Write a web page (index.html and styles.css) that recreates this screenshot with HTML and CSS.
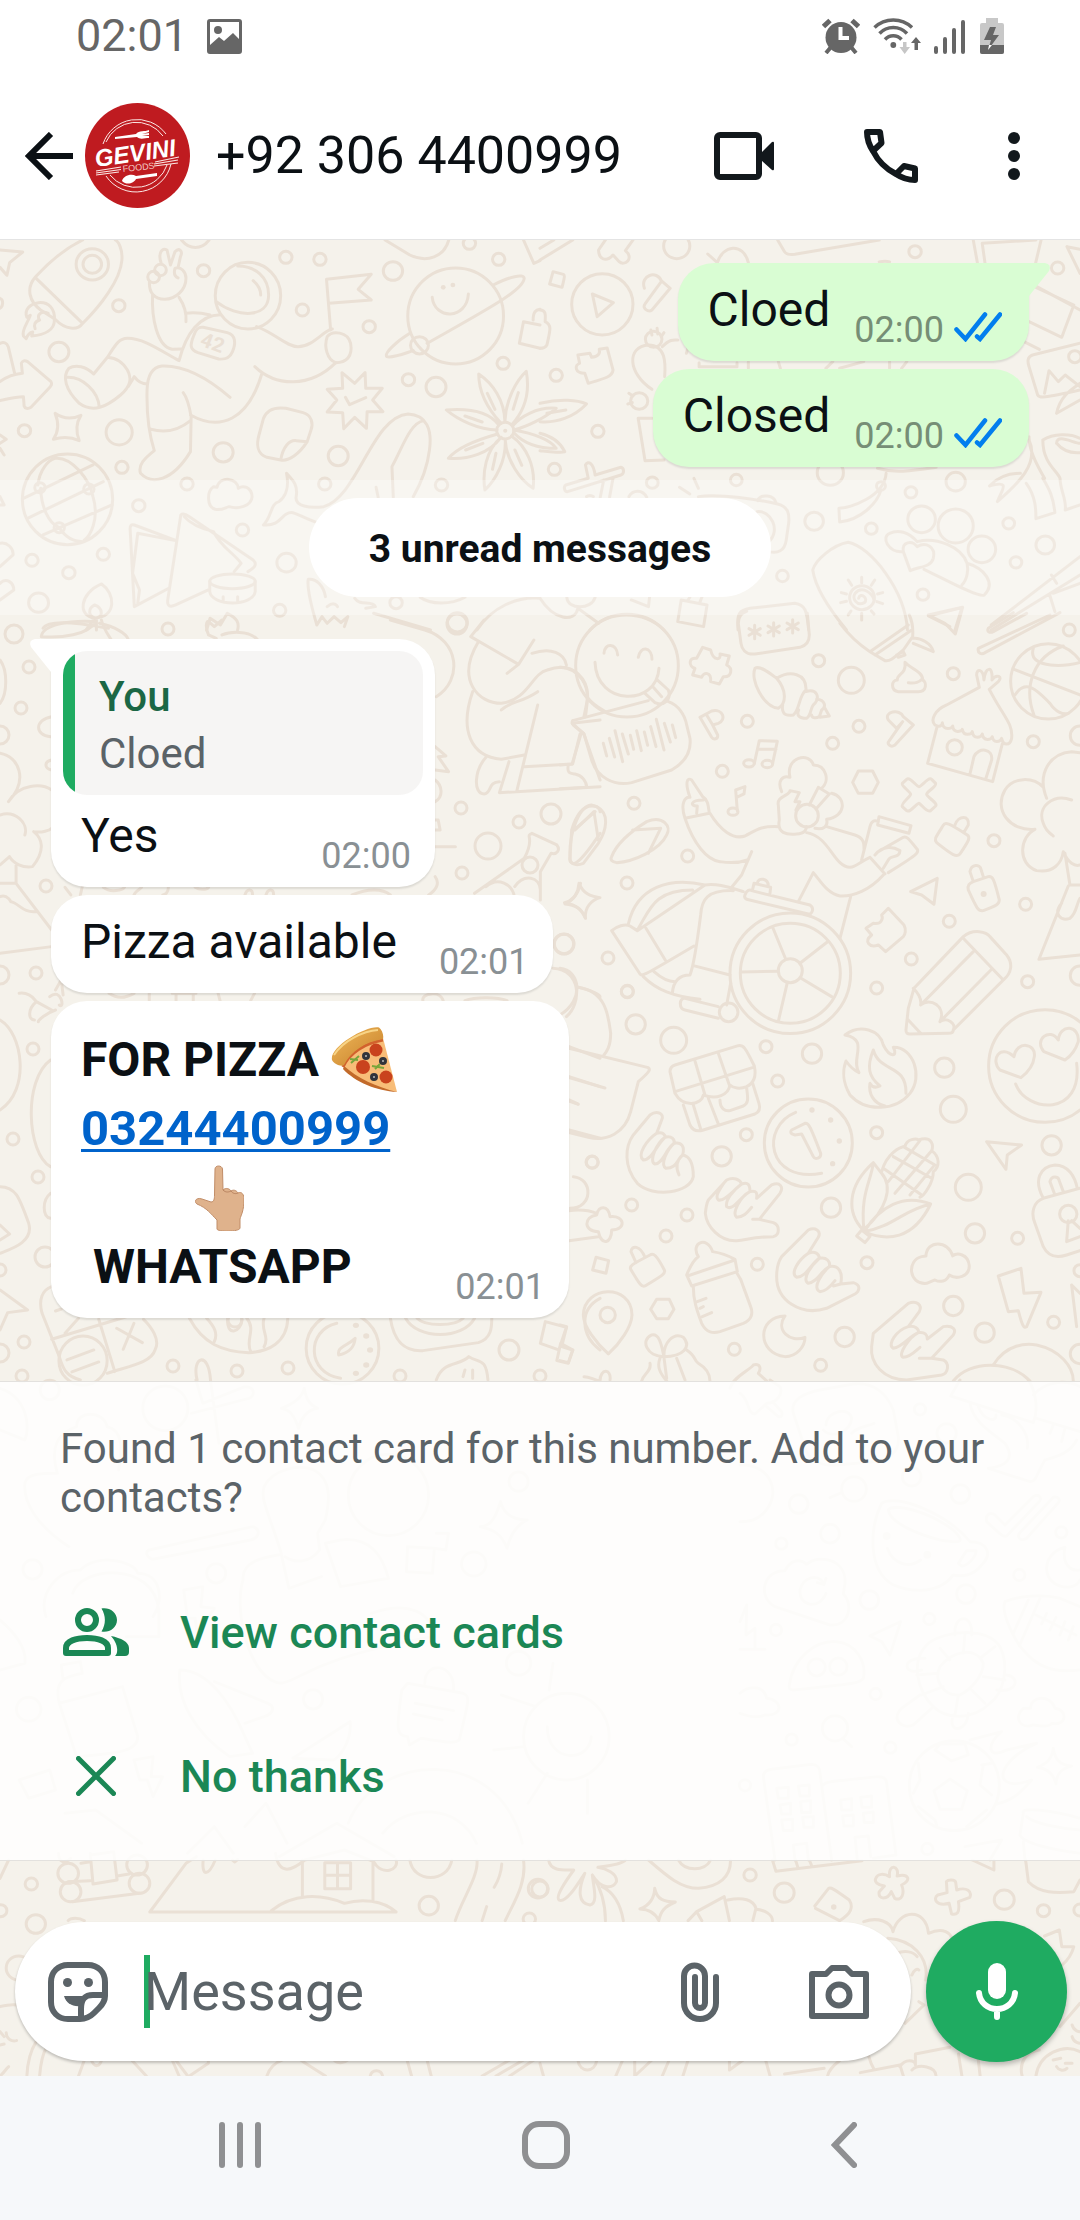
FILE: index.html
```html
<!DOCTYPE html>
<html lang="en">
<head>
<meta charset="utf-8">
<meta name="viewport" content="width=device-width, initial-scale=1">
<title>+92 306 4400999</title>
<link rel="stylesheet" href="styles.css">
</head>
<body>
<div class="statusbar">
  <span class="statusbar-time">02:01</span>
  <svg width="35" height="35" viewBox="0 0 35 35" aria-hidden="true"><path fill="#666" fill-rule="evenodd" d="M3 0H32Q35 0 35 3V32Q35 35 32 35H3Q0 35 0 32V3Q0 0 3 0ZM3 3V26L12 18L17 22L26 14L32 20V3Z"/><circle cx="11" cy="11" r="4" fill="#666"/></svg>
  <div class="statusbar-icons">
    <svg width="38" height="36" viewBox="0 0 38 36" aria-hidden="true"><g stroke="#666" stroke-width="5"><path d="M1.500 8.500L8 2.500M36.500 8.500L30 2.500"/><path d="M4 35L9 29M34 35L29 29" stroke-width="4"/></g><circle cx="19" cy="19.500" r="15.500" fill="#666"/><path d="M18.500 9V20H27" fill="none" stroke="#fff" stroke-width="4"/></svg>
    <svg class="wifi" width="48" height="36" viewBox="0 0 48 36" aria-hidden="true"><g fill="none" stroke="#666" stroke-width="3.500"><path d="M1.500 9.500C12 -.5 28.500 -.5 39 9.500M6.500 15.500C14 7.500 26.500 7.500 34 15.500M12 21.500C16.500 16.500 24 16.500 28.500 21.500"/></g><circle cx="20.300" cy="27" r="2.900" fill="#666"/><path d="M30 24H33.500V29H37L31.700 36L26.500 29H30Z" fill="#c6c6c6"/><path d="M41.500 32V25H38L43 19L48 25H45V32Z" fill="#666"/></svg>
    <svg class="signal" width="32" height="36" viewBox="0 0 32 36" aria-hidden="true"><path d="M2 30V34M11 21V34M20 12V34M29 4V34" stroke="#666" stroke-width="4" stroke-linecap="round"/></svg>
    <svg class="battery" width="24" height="36" viewBox="0 0 24 36" aria-hidden="true"><path d="M6 0H18V5H22Q24 5 24 7V34Q24 36 22 36H2Q0 36 0 34V7Q0 5 2 5H6Z" fill="#c8c8c8"/><path d="M0 27H24V34Q24 36 22 36H2Q0 36 0 34Z" fill="#666"/><path d="M10 9H16L13 17H19L8 32L11 22H4Z" fill="#666"/><path d="M9 27H12L8 32Z" fill="#fff"/></svg>
  </div>
</div>

<header class="appbar">
  <button class="icon-btn" aria-label="Back"><svg width="48" height="48" viewBox="0 0 48 48"><path d="M26 2L4 24L26 46M4 24H48" fill="none" stroke="#0b1014" stroke-width="6"/></svg></button>
  <svg class="avatar" viewBox="0 0 105 105" role="img" aria-label="Gevini Foods">
    <circle cx="52.500" cy="52.500" r="52.500" fill="#bf1b20"/>
    <g fill="none" stroke="#fbe9e6" stroke-width="1">
      <path d="M18 41A36 36 0 0 1 81 31M21 39A33 33 0 0 1 78 33M86 61A36 36 0 0 1 21 73M82 62A33 33 0 0 1 25 72"/>
      <path d="M11 68L36 64M11 70L36 66.500M11 72L34 69M70 59L94 54M69 61L93 57M69 63L93 60" stroke-width="1.200"/>
    </g>
    <path d="M30 34L51 31C54 27 60 29 64 27V29L57 31L64 30V32L57 33L64 33V35C60 35 55 37 52 34L30 36Z" fill="#fff"/>
    <path d="M72 70L51 73C46 70 38 73 37 78C42 83 49 80 51 76L72 73Z" fill="#fff"/>
    <text class="logo-name" x="11" y="64" transform="rotate(-8 11 64)">GEVINI</text>
    <text class="logo-sub" x="38" y="69" transform="rotate(-6 38 69)">FOODS</text>
  </svg>
  <h1 class="appbar-title">+92 306 4400999</h1>
  <div class="appbar-actions">
    <button class="icon-btn" aria-label="Video call"><svg width="60" height="48" viewBox="0 0 60 48"><rect x="3" y="3" width="42" height="42" rx="3" fill="none" stroke="#12181c" stroke-width="6"/><path d="M47 21L58 10Q60 9 60 11V37Q60 39 58 38L47 28Z" fill="#12181c"/></svg></button>
    <button class="icon-btn" aria-label="Voice call"><svg width="54" height="54" viewBox="0 0 54 54"><path d="M3 3H16L17.500 14L9 22C5 16 3 9 3 3ZM51 51V39.500L40 37L32 45C38 49 45 51 51 51ZM9 22C14 32 22 40 32 45" fill="none" stroke="#12181c" stroke-width="6" stroke-linejoin="round"/></svg></button>
    <button class="icon-btn" aria-label="More options"><svg width="12" height="48" viewBox="0 0 12 48" fill="#12181c"><circle cx="6" cy="6" r="6"/><circle cx="6" cy="24" r="6"/><circle cx="6" cy="42" r="6"/></svg></button>
  </div>
</header>

<main class="chat">
  <svg class="wallpaper" viewBox="0 240 1080 1836" preserveAspectRatio="xMidYMin slice" aria-hidden="true">
    <defs>
      <g id="ast"><path d="M0 -20V20M-17 -10L17 10M-17 10L17 -10"/></g>
    </defs>
    <!-- top left: rocket, astronaut, planet, whale -->
    <g transform="translate(0 230) scale(.3444 .3333)">
      <path d="M240 30C180 60 130 110 102 142C75 175 85 215 118 240L160 268C190 300 225 302 240 280C290 230 350 150 354 90C356 60 345 35 335 30M102 142L240 280"/>
      <circle cx="268" cy="103" r="47"/><circle cx="268" cy="103" r="27"/>
      <path d="M158 270C160 235 140 215 112 218C85 222 70 240 78 262L88 256C80 280 62 300 68 318L76 326C80 315 85 308 95 306L92 318C130 315 158 300 158 270ZM140 250C120 240 105 255 115 270C100 275 98 285 102 296"/>
      <path d="M0 60L66 66L28 98L20 136L0 112M527 30C550 60 585 60 607 30M1118 30L1190 75C1240 100 1290 80 1303 30M1520 30L1550 100L1568 92"/>
      <path d="M434 155C432 190 450 208 478 208C510 208 540 180 540 145C540 125 525 108 508 115C504 130 508 140 517 144M468 100C458 70 470 52 485 60L495 105L508 65C520 52 532 62 524 80L518 108"/>
      <circle cx="446" cy="141" r="17"/><circle cx="466" cy="120" r="17"/>
      <path d="M443 195C440 260 455 350 500 358L527 357M520 202C535 225 542 250 540 275M540 250C570 246 590 250 610 255"/>
      <ellipse cx="720" cy="197" rx="95" ry="100"/>
      <path d="M628 215C690 265 780 265 780 195C780 140 740 108 690 108M735 152C750 165 757 180 757 195"/>
      <path d="M640 254C580 255 540 310 520 392C470 365 420 325 370 325C345 325 335 345 312 382L272 432C250 410 220 402 200 415C180 440 190 480 230 520C270 550 310 530 350 495C385 465 380 440 370 420C355 395 340 385 312 382M195 442C240 440 285 485 288 530M372 470L390 440C400 455 410 462 428 462"/>
      <path d="M668 502C610 450 540 405 470 408C440 412 428 440 427 480C425 560 435 620 448 662C420 685 400 705 408 730C440 765 500 755 553 665L555 560C550 530 545 505 532 488M438 598C480 610 520 600 553 572M553 555C640 605 720 570 760 432M740 410C800 470 900 475 975 398M745 290C800 310 830 350 865 350C910 350 940 300 965 297"/>
      <path d="M590 292L660 308C685 315 685 340 675 365C665 390 645 388 635 387L575 368C550 358 552 345 562 318C568 298 575 290 590 292Z"/>
      <text class="doodle-text" x="578" y="346" transform="rotate(20 578 346)">42</text>
      <path d="M960 300L948 148L1078 133L1040 178L1078 210L955 220M950 320C965 300 1010 305 1018 340C1025 380 1005 398 975 398C950 390 940 350 950 320Z"/>
      <ellipse cx="1323" cy="258" rx="139" ry="144"/>
      <path d="M1432 165C1480 140 1520 130 1522 145C1520 180 1420 235 1240 340M1190 310C1150 335 1115 370 1123 380C1140 385 1170 372 1200 362M1255 202C1262 270 1355 270 1360 192"/>
      <circle cx="1218" cy="346" r="26"/><circle class="dot" cx="1287" cy="172" r="7"/><circle class="dot" cx="1315" cy="165" r="7"/>
      <path d="M0 455C20 440 45 432 65 430L62 400C65 392 72 390 80 395L148 455C152 462 150 465 146 470L90 532C80 538 72 535 70 528L68 500C40 500 20 508 0 512M0 340C10 335 20 338 24 350L42 428"/>
      <path d="M160 550C185 568 210 568 235 556C220 580 220 605 230 632C205 620 180 620 155 628C170 605 172 580 160 550Z"/>
      <path d="M1030 460L1060 428L1062 475L1110 475L1082 510L1112 545L1066 545L1064 595L1030 562L998 596L995 548L950 546L978 510L950 478L995 475L993 428ZM1003 502L1015 524L1062 503"/>
      <path d="M830 535L880 548C905 555 910 580 903 600L892 635C870 670 840 695 815 690L775 682C745 672 745 640 752 615L765 565C775 540 795 530 830 535ZM815 690C822 650 840 630 860 632L892 635"/>
      <path d="M765 885C820 890 815 845 850 848C870 855 880 862 915 876M765 885C790 860 785 820 810 815C830 800 840 770 832 730C850 750 866 765 860 800C855 830 900 835 940 830C1040 800 1080 560 1185 552C1240 555 1255 600 1247 660C1240 720 1222 760 1200 800M1230 572C1190 580 1170 650 1138 710L1142 802M1092 772L1098 802"/>
      <circle cx="1467" cy="602" r="25"/><circle class="dot" cx="1467" cy="602" r="6"/>
      <path d="M1455 580C1410 530 1390 480 1390 432C1430 460 1465 510 1466 575C1468 510 1500 450 1528 424C1540 490 1525 540 1485 585M1443 600C1390 600 1330 570 1296 540C1360 535 1420 545 1448 585M1445 612C1400 625 1330 650 1302 685C1360 690 1420 670 1455 622C1410 660 1400 730 1408 780C1440 750 1470 690 1467 630C1470 690 1510 750 1548 775C1555 710 1530 650 1485 618M1492 608C1520 640 1560 655 1615 655C1600 630 1550 610 1492 600C1530 590 1580 565 1615 535C1560 530 1510 560 1488 588M1415 490L1437 538M1505 488L1490 538M1350 558L1400 576M1352 660L1402 640M1430 718L1440 670M1515 706L1495 660"/>
      <ellipse cx="196" cy="808" rx="131" ry="136"/>
      <path d="M110 765C115 720 140 690 160 685C210 680 260 750 270 800C290 870 260 920 245 930M68 805L270 705M80 865L300 755M125 915L325 825M118 775C120 830 140 880 172 893C195 930 220 935 240 935"/>
      <circle cx="116" cy="773" r="15"/><circle cx="258" cy="777" r="15"/><circle cx="172" cy="893" r="15"/>
      <path d="M620 770C600 785 600 830 625 838C645 842 655 832 665 830C690 838 730 830 732 800C730 770 705 765 692 775C690 745 640 735 630 772C625 770 622 770 620 770Z"/>
      <path d="M512 932L390 885C380 882 377 888 378 900L390 1130L490 1075M400 910L510 932M400 910L385 1030L405 1080L400 1120M605 1080L510 1125C495 1132 485 1130 487 1110L525 855C530 850 540 853 550 860L735 990C745 1000 745 1010 720 1025M535 860C560 890 600 900 620 905C640 950 680 970 700 1000L680 1025"/>
      <ellipse cx="675" cy="1054" rx="66" ry="22"/><path d="M609 1054V1085C615 1130 735 1130 741 1085V1054M648 1100V1115M690 1100V1115"/>
      <path d="M295 1062C335 1090 340 1162 275 1164C225 1160 230 1090 295 1062ZM275 1125C300 1135 300 1164 278 1164C255 1160 255 1135 275 1125M125 1195C140 1170 210 1175 315 1195M275 1164L250 1200M280 1164V1200"/>
      <path d="M920 1185C910 1150 890 1080 895 1048C920 1045 940 1070 945 1100M920 1185L935 1160L950 1180L970 1160L990 1178L1010 1160L1000 1190M1030 1105C1045 1130 1080 1110 1090 1130L1062 1135M1085 1150L1250 1200M1385 1200C1430 1130 1500 1100 1568 1105M1220 1102C1250 1125 1310 1125 1350 1102M600 1200L610 1165L640 1185L660 1150C690 1165 695 1180 690 1200M950 1130C965 1118 975 1120 980 1130"/>
      <path d="M1520 275L1568 285M1520 275L1508 340L1568 355M1548 270C1548 245 1556 240 1568 238M0 940C20 935 40 955 38 975L0 1010M0 1060C20 1040 40 1060 40 1080L0 1110M0 205C12 210 8 230 0 235M0 615L18 628L0 640M0 655L12 675M0 800L12 825L0 825"/>
      <circle cx="345" cy="227" r="18"/><circle cx="591" cy="122" r="18"/><circle cx="830" cy="82" r="18"/><circle cx="929" cy="88" r="18"/><circle cx="1141" cy="123" r="28"/><circle cx="878" cy="240" r="18"/><circle cx="1072" cy="290" r="18"/><circle cx="1363" cy="40" r="18"/><circle cx="1448" cy="88" r="18"/><circle cx="171" cy="366" r="29"/><circle cx="71" cy="602" r="18"/><circle cx="346" cy="607" r="38"/><circle cx="354" cy="712" r="18"/><circle cx="648" cy="667" r="29"/><circle cx="982" cy="678" r="29"/><circle cx="1186" cy="449" r="18"/><circle cx="1266" cy="471" r="29"/><circle cx="1461" cy="400" r="18"/><circle cx="543" cy="762" r="18"/><circle cx="403" cy="827" r="18"/><circle cx="943" cy="762" r="18"/><circle cx="1282" cy="765" r="18"/><circle cx="704" cy="900" r="18"/><circle cx="832" cy="998" r="28"/><circle cx="93" cy="991" r="18"/><circle cx="300" cy="973" r="18"/><circle cx="200" cy="1028" r="18"/><circle cx="112" cy="1118" r="29"/><circle cx="812" cy="1141" r="18"/><circle cx="1150" cy="1118" r="18"/><circle cx="1328" cy="1177" r="29"/>
    </g>
    <!-- top right: play button, books, surfboard -->
    <g transform="translate(540 230) scale(.3444 .3333)">
      <path d="M190 30L170 60C170 85 190 100 212 75L230 95C245 110 275 85 248 62L270 30M0 55L40 30M0 90L95 30M152 192L213 218L166 260ZM38 125L68 133C72 135 72 140 64 172L28 162ZM303 175C290 135 340 120 352 152L378 175L325 240C315 248 295 235 305 222L352 155"/>
      <circle cx="397" cy="48" r="38"/><ellipse cx="181" cy="223" rx="89" ry="92"/>
      <path d="M110 375L145 370L150 382C170 380 175 370 172 358L195 354L212 420C210 440 190 445 140 460L130 430C100 430 100 405 115 400ZM0 520C60 505 110 510 135 522C100 560 50 580 0 575M20 550L75 540M0 610C40 620 60 640 72 665C40 670 20 665 0 662M0 240C20 240 15 260 15 275C35 285 30 300 20 345C15 355 8 355 0 355"/>
      <path d="M325 478C255 430 250 350 315 345C365 345 365 400 362 440M355 350C380 325 390 330 400 330M285 565L305 692L360 690M285 565H325M425 370L432 345M322 300L325 315M340 295L342 312M360 308L352 320M258 490L270 498M255 522L268 518"/>
      <circle cx="330" cy="328" r="24"/><circle cx="288" cy="513" r="25"/>
      <path d="M690 30L710 65C715 75 730 74 740 73L985 30M487 72L515 98C530 45 590 35 605 98M1258 30L1270 98M1284 40L1292 98M1284 40L1440 30M1455 30L1425 160L1568 240M1435 170L1550 225L1515 322L1420 275M1530 50L1568 130M1530 50L1568 58M985 96C1000 92 1005 92 1015 96"/>
      <path d="M1568 340L1430 375C1415 380 1415 395 1420 410L1445 495C1450 505 1460 505 1568 480M1465 490L1478 422L1505 455L1525 435L1568 470M1405 335L1450 358M1500 550C1510 500 1540 480 1568 460M1500 550L1568 510"/>
      <path d="M462 398V410H572V398M605 395V415M692 395L698 415M850 395L830 415M870 415L940 395M1015 395V415M1065 395L1050 415"/>
      <path d="M75 765L140 745L132 705C140 690 155 700 160 735L235 712C245 715 245 730 235 735L80 785C70 785 68 770 75 765M185 750L175 802M212 745L202 802M405 772L435 792M447 745L460 775M135 800C140 795 150 795 155 800M258 800C270 778 298 778 310 802"/>
      <path d="M460 800C520 790 640 810 690 822C720 830 725 850 722 880L715 930C710 965 690 970 665 965M632 812C640 790 680 795 685 818M630 845C670 840 700 900 665 935"/>
      <path d="M1005 730C1000 800 900 835 868 835L870 876C930 870 980 820 990 780M980 715C1030 730 1060 725 1150 712M1420 630C1450 700 1390 760 1328 815C1340 780 1370 750 1305 768C1340 730 1380 730 1395 730M1420 620C1420 660 1440 700 1465 745M1412 760C1440 800 1440 840 1440 866L1495 848C1490 800 1480 780 1460 745M1460 630C1460 700 1500 720 1510 745C1510 780 1530 810 1525 840L1568 825M1460 630C1490 610 1540 610 1568 625M1500 640C1500 610 1550 640 1568 640M1500 640C1520 665 1545 670 1568 668"/>
      <circle cx="990" cy="768" r="13"/>
      <circle cx="1108" cy="868" r="40"/><circle cx="1207" cy="888" r="51"/><circle cx="1283" cy="958" r="40"/>
      <path d="M1055 965C1010 970 990 920 1015 910C1040 898 1070 905 1095 935C1150 920 1225 950 1240 1000C1290 1015 1325 1060 1290 1095C1275 1105 1180 1050 1115 1018M1240 1000C1245 1020 1240 1050 1225 1065M1075 1022L1055 965C1050 935 1080 930 1095 950C1120 935 1150 950 1142 985C1135 1012 1100 1010 1075 1022Z"/>
      <path d="M895 937C960 950 1060 1080 1067 1200M895 937C850 945 800 990 792 1020C800 1080 850 1150 890 1200M925 1105C930 1085 955 1105 942 1118C920 1130 905 1105 915 1090C935 1065 965 1090 970 1110M934 1042V1058M934 1150V1170M873 1118L890 1114M875 1088L890 1092M980 1092L995 1088M978 1115L995 1121M895 1050L905 1066M972 1050L962 1066M895 1155L903 1143M970 1152L962 1143"/>
      <circle cx="935" cy="1103" r="36"/>
      <path d="M1568 980L1310 1185M1568 1035L1310 1200M1485 1035L1500 1060M1480 1095L1495 1145M1490 1090L1568 1060M1128 1158L1225 1133L1205 1200M1128 1158L1190 1190M575 1200C570 1150 580 1140 610 1135L740 1120C770 1125 775 1140 780 1200M410 1110L485 1125L475 1190L400 1175ZM430 1110L435 1102M465 1115L470 1102M0 1105C40 1170 100 1180 110 1135L170 1180M78 1102C80 1140 150 1140 160 1102M265 1110L315 1130L318 1102M145 1200C200 1140 300 1140 360 1200"/>
      <circle cx="1089" cy="65" r="18"/><circle cx="1503" cy="114" r="18"/><circle cx="1553" cy="380" r="18"/><circle cx="47" cy="436" r="18"/><circle cx="168" cy="604" r="18"/><circle cx="42" cy="718" r="18"/><circle cx="326" cy="758" r="17"/><circle cx="570" cy="750" r="17"/><circle cx="843" cy="728" r="38"/><circle cx="1207" cy="755" r="28"/><circle cx="1077" cy="787" r="17"/><circle cx="796" cy="874" r="27"/><circle cx="962" cy="896" r="17"/><circle cx="1361" cy="880" r="17"/><circle cx="1467" cy="945" r="27"/><circle cx="1382" cy="997" r="17"/><circle cx="704" cy="1038" r="17"/><circle cx="1112" cy="1094" r="17"/>
    </g>
    <!-- middle right: voice note, musician, wheelchair -->
    <g transform="translate(560 600) scale(.3333)">
      <circle cx="201" cy="197" r="154"/>
      <path d="M132 160C133 128 170 128 173 165M235 172C240 138 275 138 276 178M105 187C110 320 290 320 297 205M290 238L325 270C335 300 310 320 285 308L255 280M280 262L305 290M38 362L265 302M325 305C355 315 375 345 380 375L390 415C395 460 370 490 335 510L215 548C160 560 110 530 95 480L72 402L40 375C36 370 36 365 38 362M130 430l10 38M148 415l16 56M165 392l23 93M187 402l18 60M211 406l10 42M230 392l14 60M253 396l10 40M272 380l16 60M289 358l23 92M313 370l18 56M337 375l10 38"/>
      <path d="M0 202C60 205 90 260 80 310L72 350M85 295C100 315 120 325 137 335M60 402L38 492L0 495M25 495C20 520 30 520 45 522C65 525 80 545 80 562L0 566"/>
      <path d="M428 142L452 150C460 185 485 180 480 162L508 168L500 195C520 205 515 232 490 230L478 252L452 245C455 215 430 215 425 232L398 225L405 205C385 200 385 170 410 175Z"/>
      <path d="M742 40L748 105C748 130 735 138 720 142L585 162C555 165 545 145 543 130L535 70C535 50 545 38 560 34M930 155L975 182C990 185 1000 175 1030 150L1058 110C1060 85 1055 60 1048 45M840 70C870 110 900 135 930 155L1045 75M945 165L1052 92M1060 115C1080 112 1115 130 1120 155L1060 130M1010 165L1030 155L1035 165L1015 172Z"/>
      <use href="#ast" x="584" y="96"/><use href="#ast" x="641" y="88"/><use href="#ast" x="698" y="79"/>
      <path d="M1105 45L1208 22L1186 102L1155 70ZM1360 38L1285 85C1280 95 1290 100 1300 95L1400 40M1470 45L1255 145C1252 160 1265 165 1275 158L1500 38"/>
      <circle cx="1465" cy="244" r="113"/>
      <path d="M1362 208L1568 288M1420 145C1400 210 1530 200 1568 185M1510 138C1420 170 1390 260 1422 345M1365 285C1400 230 1440 280 1470 310C1485 335 1510 345 1525 340"/>
      <path d="M585 205C600 195 630 220 650 235C680 270 680 310 655 325C610 320 570 240 585 205ZM650 235C690 210 740 220 738 270C715 290 720 330 700 345C670 350 665 335 668 315M738 275C770 265 780 290 765 310C750 320 755 345 740 355C715 355 710 345 716 330M770 298C795 300 800 320 785 330L778 350C765 357 755 352 755 345M795 325L808 348L780 352"/>
      <path d="M1035 187C1050 205 1090 215 1088 240C1100 245 1102 275 1075 275H1015C990 270 995 240 1012 240C1010 220 1040 225 1035 187ZM1045 248C1065 252 1080 245 1085 238"/>
      <path d="M1258 262L1250 225C1250 205 1270 205 1272 240C1275 200 1300 195 1296 240C1310 220 1330 230 1315 245L1288 268M1258 262L1160 315C1125 330 1110 360 1125 375C1145 385 1147 370 1147 368C1150 395 1178 385 1178 378C1180 402 1205 395 1207 388C1212 412 1235 402 1237 395C1240 420 1265 412 1267 402C1270 425 1295 420 1297 410C1300 432 1322 425 1325 415C1330 438 1350 438 1355 415C1360 370 1330 350 1288 268M1132 378L1103 490L1298 545L1327 432M1230 522L1242 470C1255 440 1300 445 1295 480L1278 535"/>
      <circle cx="1184" cy="442" r="23"/>
      <path d="M420 352L455 333C490 325 500 360 475 370L458 375L473 405C475 418 460 420 455 412ZM440 345L460 378M985 360C970 335 1020 325 1030 350L1060 375L1005 435C990 445 982 430 986 425L1028 365L1010 385L985 360"/>
      <path d="M583 490L598 422L652 424L638 490M594 448H648M532 632L527 570L555 560L552 582L530 592"/>
      <ellipse cx="567" cy="490" rx="16" ry="11"/><ellipse cx="622" cy="492" rx="16" ry="11"/><ellipse cx="519" cy="635" rx="15" ry="11"/>
      <path d="M895 513H938L955 547L938 580H895L878 547ZM1040 538C1050 530 1070 560 1077 560C1085 560 1105 530 1115 538L1127 550C1130 560 1100 575 1100 583C1100 590 1135 610 1127 618L1112 632C1100 640 1082 610 1077 610C1070 610 1050 640 1040 632L1027 620C1022 610 1052 590 1052 583C1052 575 1022 558 1027 550Z"/>
      <path d="M665 575C650 540 670 525 690 532C675 470 750 455 760 495C800 495 810 545 785 565M690 575C680 590 650 590 655 615L658 660C650 700 680 705 710 702C735 700 738 690 740 680M690 572L718 578L705 605L720 605L708 630M748 615L775 562L808 582L770 625M815 580C860 590 860 650 800 658C805 680 790 690 765 685"/>
      <circle cx="741" cy="647" r="34"/>
      <path d="M375 655C360 610 375 590 390 592C375 550 380 530 395 540L428 590C445 600 445 620 448 640ZM410 640L412 618C390 620 390 600 430 600M375 655C400 730 440 780 480 785C510 790 540 788 562 780M450 640C480 690 520 720 555 708C590 690 600 678 655 680M575 755L545 825L515 862M740 698C810 710 820 800 870 802C890 800 900 785 930 772M800 680L885 705C915 715 912 735 912 748M905 780L930 680C935 660 945 660 955 665M957 650L1053 677L1047 700L953 675ZM930 772L975 822M955 755L1030 712C1040 708 1045 715 1072 748C1078 758 1070 765 985 818M945 765C970 735 1000 740 1020 752C1020 775 990 765 985 780L970 805M970 825C930 870 880 890 840 888C800 880 780 840 760 818L715 905M872 890L840 1015"/>
      <path d="M35 690C50 640 75 610 110 620C150 640 140 690 115 730L70 790C45 800 25 790 30 770ZM45 690L102 635L115 720M155 770C170 730 220 690 260 665C310 645 335 680 320 705C300 750 220 785 170 788C155 785 150 780 155 770ZM218 690L302 685L265 760M57 850C70 880 90 890 120 893C95 900 75 920 76 953C65 925 45 915 15 912C40 900 55 880 57 850Z"/>
      <circle cx="691" cy="1120" r="181"/><circle cx="691" cy="1120" r="150"/><circle cx="691" cy="1112" r="36"/>
      <path d="M677 1077L638 982M720 1090L802 1026M655 1114L543 1116M682 1148L655 1264M722 1134L815 1190"/>
      <path d="M205 972C230 860 330 830 435 855C470 850 500 860 550 875M232 990C270 930 280 870 398 870M155 992C170 980 195 970 210 978L232 992L435 855M155 992L240 1122C245 1130 250 1128 402 1038M258 985L318 1084M520 872C440 870 425 900 422 945C410 1040 400 1100 390 1125C360 1125 340 1140 337 1180M282 1115C310 1140 330 1145 345 1145M250 1130C290 1170 340 1190 420 1198M400 1097L510 1125M512 1150L500 1215M555 885C560 870 570 868 575 872L750 915C765 925 755 945 745 942L560 898C553 895 553 890 555 885M578 868L582 850L632 862L630 880M592 850C595 830 625 835 625 858"/>
      <path d="M1460 595C1430 520 1470 460 1535 455L1560 458M1450 562C1420 530 1360 530 1335 570C1300 630 1350 695 1425 688C1380 710 1370 790 1430 812C1480 820 1505 790 1510 755C1525 790 1545 800 1560 795M1535 600C1480 580 1430 620 1450 670C1460 700 1480 705 1480 708M1515 760L1530 855H1560M1525 858L1437 1078L1560 1065M1505 910C1480 940 1500 965 1530 955C1550 940 1550 910 1560 895"/>
      <path d="M1150 676C1155 665 1165 668 1222 705C1232 712 1228 720 1200 762C1190 772 1180 768 1130 728C1122 718 1125 715 1150 676ZM1185 675C1195 645 1230 645 1225 675L1212 697M1240 845L1285 830C1298 828 1302 835 1318 900C1318 912 1310 918 1270 932C1255 935 1250 925 1225 870C1222 855 1228 850 1240 845ZM1240 845L1230 815C1235 790 1260 795 1262 805L1270 830M1052 875L1132 835L1122 913L1085 885ZM985 925L1032 975C1040 990 1035 1005 1030 1010L977 1055L955 1035C930 1045 910 1025 935 1005L918 985L940 970C965 975 970 955 965 945Z"/>
      <circle class="dot" cx="1271" cy="882" r="9"/>
      <path d="M1062 1165L1210 1010C1240 985 1280 995 1290 1010L1340 1065C1360 1090 1355 1120 1330 1140L1180 1290M1210 1015L1330 1140M1240 1055L1082 1215M1295 1108L1140 1265M1062 1165L1045 1225L1038 1290C1038 1300 1042 1302 1050 1302L1165 1300C1175 1300 1180 1295 1180 1290M1060 1165C1080 1185 1085 1200 1082 1215C1110 1190 1160 1220 1140 1265C1160 1250 1190 1270 1180 1290M1045 1260L1082 1300"/>
      <path d="M0 1105C60 1110 75 1200 0 1245M55 1162C140 1175 145 1250 152 1300C152 1340 140 1355 130 1368"/>
      <circle cx="776" cy="182" r="18"/><circle cx="874" cy="241" r="39"/><circle cx="1180" cy="221" r="18"/><circle cx="562" cy="364" r="18"/><circle cx="897" cy="379" r="18"/><circle cx="818" cy="430" r="18"/><circle cx="487" cy="514" r="18"/><circle cx="1420" cy="425" r="18"/><circle cx="1528" cy="90" r="18"/><circle cx="1560" cy="407" r="29"/><circle cx="222" cy="610" r="18"/><circle cx="383" cy="768" r="18"/><circle cx="201" cy="849" r="18"/><circle cx="144" cy="1074" r="18"/><circle cx="202" cy="1174" r="18"/><circle cx="1302" cy="722" r="18"/><circle cx="1397" cy="913" r="18"/><circle cx="1168" cy="964" r="18"/><circle cx="1054" cy="1077" r="18"/><circle cx="1403" cy="1145" r="18"/><circle cx="950" cy="1164" r="18"/><circle cx="12" cy="1032" r="29"/><circle cx="1560" cy="1127" r="29"/>
    </g>
    <!-- lower right: fire, clock, corn, hands -->
    <g transform="translate(560 980) scale(.3333)">
      <path d="M475 80L375 55C358 52 355 85 375 90L475 115"/><circle cx="506" cy="97" r="28"/>
      <path d="M27 205L265 263C272 268 270 275 235 305L212 395C195 460 140 485 85 472L27 458M27 293L135 324M27 363L55 373"/>
      <path d="M345 255L535 197C550 195 555 200 583 258C590 290 580 310 560 320C540 328 520 325 510 315C505 345 470 360 430 345C425 375 370 385 345 340L330 275C330 265 335 258 345 255ZM345 335L580 262M405 243L435 345M475 220L508 315M370 375L390 435C400 455 415 455 430 450L585 402C600 395 600 380 597 370L578 310M400 375L422 447M445 355L475 432M480 360C480 385 495 395 510 392L550 378C565 370 565 360 560 325"/>
      <path d="M855 165C900 130 960 150 970 195C990 235 1015 230 1000 202C1060 200 1090 290 1050 340C1010 390 920 400 870 345C845 300 848 270 858 243C870 260 880 270 897 278C870 235 930 180 855 165ZM940 210C920 260 925 290 960 318C945 325 935 320 930 310C925 340 940 370 975 378M940 210C960 280 1040 250 1038 340"/>
      <circle cx="745" cy="489" r="132"/>
      <path d="M707 397C600 440 620 610 785 580M695 450L735 430C745 428 750 435 782 520C785 535 765 540 760 530L725 462L705 465C690 462 690 455 695 450Z"/>
      <circle class="dot" cx="756" cy="390" r="8"/><circle class="dot" cx="812" cy="420" r="8"/><circle class="dot" cx="838" cy="483" r="8"/><circle class="dot" cx="818" cy="551" r="8"/>
      <circle cx="1455" cy="258" r="169"/>
      <path d="M1383 293L1320 270C1290 240 1320 190 1362 230C1370 180 1430 190 1423 230C1420 260 1400 280 1383 293ZM1515 240L1452 215C1420 180 1470 140 1495 180C1500 130 1560 135 1555 185C1545 215 1530 230 1515 240ZM1367 312C1400 400 1570 410 1550 250"/>
      <path d="M965 575C980 520 1020 500 1035 500C1040 475 1070 475 1075 480C1120 465 1120 500 1115 512C1140 530 1140 560 1120 575C1120 610 1090 650 1080 652M940 548C860 620 860 700 910 750C980 690 1000 620 965 580ZM940 548C935 600 900 640 912 750M912 755C960 680 1030 640 1112 672C1060 780 980 785 912 755ZM912 755C1000 740 1030 690 1112 672M890 768L905 750L930 770L915 788ZM970 565L1085 645M1000 530L1115 595M1030 500L1125 555M985 605L1080 482M1005 640L1115 512M1050 645L1120 560"/>
      <path d="M232 610C190 560 195 500 220 465L270 405C290 390 315 400 305 420L290 460C310 455 315 465 315 472C335 465 345 480 342 490C365 485 375 500 368 525C400 530 400 580 400 590C390 640 280 655 232 610ZM290 460C260 480 230 525 250 540C275 540 290 495 315 472C290 490 265 545 285 552C310 550 315 510 342 490C320 510 300 555 318 565C350 565 350 540 368 525C345 545 350 570 357 585"/>
      <path d="M445 660L500 600C520 590 540 598 545 612C565 605 570 615 570 635C590 630 592 640 590 655L635 615C660 605 672 620 660 640L598 718L640 728C660 735 660 765 640 770C580 770 560 780 530 782C480 785 440 740 436 700C438 680 440 670 445 660ZM545 612C520 630 495 665 475 660C465 650 475 635 490 612M570 635C540 650 520 695 500 680C495 660 520 630 545 612M575 682C560 700 550 712 530 712C515 700 540 650 570 635M578 718L598 718"/>
      <path d="M665 830L745 750C765 740 785 752 775 772L745 820C765 812 778 822 778 835C800 830 812 845 808 860C835 855 850 875 842 912L880 908C905 915 898 935 885 942L800 985C720 1010 650 960 650 890C650 860 655 845 665 830ZM745 820C715 840 690 880 710 892C740 890 750 855 778 835C750 860 725 900 745 910C775 905 780 875 808 860C785 880 755 925 780 935C800 935 815 915 825 902M820 918L842 912"/>
      <path d="M940 1060L1045 970C1070 960 1088 975 1078 995L1045 1040C1065 1035 1078 1048 1075 1058C1095 1055 1102 1065 1102 1077L1150 1040C1180 1035 1190 1050 1180 1065L1115 1135L1150 1140C1170 1150 1165 1180 1145 1185L1040 1200C970 1200 930 1150 935 1100ZM1045 1040C1010 1050 980 1095 1000 1105C1030 1100 1045 1070 1075 1058C1050 1070 1010 1125 1030 1132C1050 1132 1065 1115 1080 1102M1078 1135H1115"/>
      <path d="M110 705C115 675 145 675 150 710C195 705 200 750 155 750C155 790 125 800 115 755C70 755 70 710 110 705ZM27 692C60 688 90 692 110 700M27 782L115 770M40 590C100 595 100 685 30 685"/>
      <path d="M108 832L146 842L138 880L98 870ZM270 825C280 818 290 825 313 870C318 880 310 885 255 918C245 922 240 915 212 868C208 858 212 855 270 825ZM228 848L213 815C215 795 240 795 255 832M415 830C390 790 440 765 458 815C490 820 510 830 525 838L532 875L395 918L380 885C390 860 400 840 415 830ZM382 888L525 840M400 920C400 960 410 990 425 1030C440 1060 460 1060 480 1055L550 1030C575 1020 580 1000 572 980L550 920C545 900 535 885 530 878M412 965L438 955M420 985L430 980M427 1010L455 998"/>
      <path d="M145 1122C110 1090 70 1040 70 1005C72 915 215 910 216 1005C215 1040 180 1090 145 1122Z"/><circle cx="143" cy="1005" r="23"/>
      <path d="M675 1008C590 1010 590 1120 675 1130C710 1130 735 1100 735 1072C690 1090 645 1050 675 1008ZM1085 830C1040 840 1045 915 1100 910L1125 900C1140 908 1160 905 1168 885C1190 900 1228 890 1228 858C1225 820 1190 818 1178 828C1165 780 1100 780 1098 828ZM1280 485L1385 495L1342 525L1338 568ZM1450 655C1420 600 1440 560 1485 555C1525 555 1545 590 1552 625M1483 640L1470 605C1475 585 1495 590 1497 600L1510 635M1450 655L1560 625M1450 655C1420 665 1412 700 1425 730L1450 800C1465 830 1490 835 1520 825L1560 812M1525 722L1520 785L1560 770M1535 722L1560 745"/>
      <circle cx="1525" cy="702" r="26"/>
      <path d="M1315 888L1383 865L1392 940L1443 937L1400 1040C1392 1045 1388 1042 1375 992L1345 995ZM290 958H328L342 988L325 1016H290L272 988ZM312 1130C260 1130 240 1080 275 1065C300 1060 305 1100 312 1130C310 1090 340 1055 370 1072C395 1100 370 1130 312 1130ZM380 1110C410 1130 400 1140 415 1150C440 1165 450 1185 450 1203M270 1150C275 1175 250 1180 245 1203M300 1135C290 1160 300 1180 320 1203M312 1133L320 1195M350 1135L375 1200M510 1225C520 1190 570 1170 580 1155C600 1150 605 1165 595 1180L620 1203M0 1035L20 1040L5 1100L38 1110L25 1148L0 1142M72 1190C90 1190 100 1200 120 1203C120 1165 155 1165 150 1200"/>
      <path d="M1180 1203C1230 1140 1350 1140 1410 1203M1300 1155C1340 1090 1400 1090 1430 1095C1500 1110 1540 1160 1540 1203M1535 915L1560 940M1535 915L1550 1040"/>
      <circle cx="202" cy="35" r="18"/><circle cx="227" cy="133" r="29"/><circle cx="341" cy="181" r="39"/><circle cx="618" cy="200" r="18"/><circle cx="756" cy="221" r="29"/><circle cx="653" cy="303" r="18"/><circle cx="559" cy="464" r="18"/><circle cx="485" cy="529" r="29"/><circle cx="97" cy="547" r="18"/><circle cx="215" cy="675" r="18"/><circle cx="381" cy="705" r="18"/><circle cx="318" cy="768" r="18"/><circle cx="1153" cy="263" r="29"/><circle cx="1180" cy="388" r="39"/><circle cx="950" cy="458" r="18"/><circle cx="813" cy="683" r="29"/><circle cx="1475" cy="496" r="29"/><circle cx="1225" cy="622" r="39"/><circle cx="1245" cy="760" r="29"/><circle cx="1373" cy="775" r="18"/><circle cx="921" cy="848" r="18"/><circle cx="592" cy="853" r="18"/><circle cx="1180" cy="978" r="29"/><circle cx="1481" cy="1027" r="18"/><circle cx="1274" cy="1058" r="29"/><circle cx="854" cy="1071" r="29"/><circle cx="523" cy="1108" r="18"/><circle cx="782" cy="1156" r="18"/><circle cx="1560" cy="872" r="18"/><circle cx="1560" cy="1122" r="29"/>
    </g>
    <!-- middle left, around the incoming bubbles -->
    <g transform="translate(0 620) scale(.3827 .3333)">
      <path d="M108 50C110 15 180 0 250 5C230 45 160 55 108 50ZM260 10C300 20 330 40 335 58M265 0C270 25 280 40 290 58M545 45C535 20 540 0 545 5L560 20L580 0M580 45C600 35 650 30 672 58M545 45L565 55M0 120C20 150 20 220 0 250M0 400C50 410 75 480 22 545C50 490 110 490 135 510M0 585C40 570 75 610 65 645M88 635C110 640 130 630 135 625M88 635C110 655 120 690 85 740C60 745 35 730 25 710L0 735M42 730V790L135 930M0 790L42 790M0 830C20 820 30 850 28 845C50 850 60 880 95 875M0 1000L135 980M135 290C90 300 90 345 132 350M135 420C115 425 115 445 135 450"/>
      <path d="M1020 0L1110 30C1200 60 1210 180 1140 230M1265 0L1230 50L1355 133L1395 60M1355 133L1325 160M1250 65C1190 180 1250 250 1310 250C1380 240 1390 160 1430 150C1500 120 1540 180 1535 240L1530 290M1235 215C1200 330 1230 410 1310 418L1370 405M1310 270C1340 240 1360 250 1405 215M1405 255L1350 515M1370 440L1495 432L1520 335M1305 518L1330 425M1305 518L1568 500M1270 412C1240 450 1235 520 1265 522C1285 520 1275 485 1305 485M1568 300L1495 310L1525 340L1568 480M1390 100C1440 80 1475 100 1480 135"/>
      <path d="M1137 380L1165 408L1145 410L1172 455L1137 450M1137 480C1155 495 1160 530 1137 545M1137 600H1145L1150 630H1137M1137 680H1190M1240 820L1370 715C1400 650 1370 650 1390 640L1455 675C1465 690 1455 705 1440 700L1412 755V840M1270 800C1300 770 1340 790 1345 835M1345 800C1370 760 1410 770 1412 810M1490 720C1485 650 1510 560 1545 555C1568 560 1568 570 1568 575M1490 720C1495 740 1510 740 1568 640M1500 630L1555 575M1517 790C1510 830 1490 845 1475 848C1510 855 1520 870 1530 895"/>
      <path d="M170 802L185 825M215 800L210 825M270 802C290 820 320 810 325 802M350 825C355 810 370 805 370 802M440 802C440 820 430 825 425 825M510 802C520 810 540 810 545 802M640 825C645 805 660 805 660 825M695 825C700 805 715 805 715 825M920 825C960 805 1000 805 1020 825M1137 770C1150 790 1140 810 1120 825M50 1120C80 1115 90 1140 95 1145L135 1170M95 1145C70 1170 75 1200 90 1200M145 1110L160 1080L165 1125M1445 1045C1520 1050 1520 1150 1480 1190M1505 1100C1540 1110 1568 1120 1568 1130"/>
    </g>
    <g transform="translate(0 980) scale(.3827 .3333)">
      <path d="M145 90C120 100 100 120 100 125M0 120C60 160 80 330 0 390M132 240C60 300 70 520 132 560M0 620C40 620 50 650 75 730C90 790 20 810 0 820M0 735L25 762L0 780M132 640C110 660 110 710 132 715M0 930L72 990L20 998L0 1050M135 920C110 930 100 960 110 1000L155 1130C165 1170 175 1190 210 1200M135 1078L345 1005M205 1015L170 1060M258 1018L300 1175M145 993L160 987M305 1045L372 1088M350 1030L322 1108M375 1018C395 1040 420 1080 405 1110C395 1150 330 1160 280 1180M175 1140L245 1110M188 1176L258 1146M130 50C160 20 170 90 155 75M285 40C310 60 335 50 350 40M450 40H512M460 40V62M505 40V62M390 40V62M570 40L575 62M665 40L655 62M1105 62C1100 40 1150 30 1158 62M1215 62C1240 50 1300 50 1325 62"/>
      <path d="M495 1015C530 1090 580 1115 650 1118C700 1115 750 1090 752 1015M540 1015C560 1040 570 1060 560 1085M595 1015C590 1070 630 1060 632 1018M645 1015C670 1050 640 1080 655 1115M690 1015C680 1050 705 1070 690 1100M1020 1015C1030 1090 1060 1115 1105 1112L1250 1088C1285 1075 1285 1040 1285 1015M1060 1015C1090 1080 1210 1080 1240 1015M1090 1015C1110 1040 1190 1040 1210 1015M1425 1025L1480 1042L1460 1110L1412 1090ZM1465 1090L1497 1110L1485 1150L1455 1142ZM1568 955C1510 990 1520 1070 1568 1110M885 1125C880 1100 905 1100 928 1075C925 1110 905 1120 885 1125M515 1200C500 1130 545 1110 550 1200M1140 1200C1160 1140 1200 1160 1225 1130C1250 1150 1270 1130 1275 1200M1215 1170L1210 1190M1235 1170V1195"/>
      <path d="M1487 200L1568 235M1487 290L1568 320M1487 360L1510 372M1487 450L1568 475"/>
      <ellipse cx="895" cy="1105" rx="95" ry="108"/><ellipse cx="217" cy="1142" rx="63" ry="74"/>
      <path d="M880 1030C800 1050 800 1180 890 1195"/>
      <circle class="dot" cx="930" cy="1036" r="8"/><circle class="dot" cx="957" cy="1068" r="8"/><circle class="dot" cx="967" cy="1110" r="8"/><circle class="dot" cx="957" cy="1155" r="8"/><circle class="dot" cx="930" cy="1180" r="8"/>
    </g>
    <g>
      <circle cx="14" cy="634" r="9"/><circle cx="168" cy="629" r="6"/><circle cx="457" cy="624" r="10"/><circle cx="29" cy="667" r="6"/><circle cx="21" cy="708" r="6"/><circle cx="0" cy="735" r="9"/><circle cx="461" cy="808" r="6"/><circle cx="551" cy="814" r="10"/><circle cx="519" cy="822" r="6"/><circle cx="488" cy="846" r="13"/><circle cx="462" cy="873" r="6"/><circle cx="530" cy="865" r="8"/><circle cx="46" cy="886" r="6"/><circle cx="564" cy="944" r="10"/><circle cx="36" cy="973" r="6"/><circle cx="0" cy="975" r="9"/><circle cx="33" cy="1049" r="6"/><circle cx="13" cy="1139" r="6"/><circle cx="38" cy="1177" r="6"/><circle cx="592" cy="1162" r="6"/><circle cx="45" cy="1257" r="10"/><circle cx="0" cy="1270" r="6"/><circle cx="24" cy="1342" r="6"/><circle cx="0" cy="1353" r="9"/><circle cx="22" cy="1376" r="6"/><circle cx="173" cy="1366" r="6"/><circle cx="237" cy="1371" r="6"/><circle cx="288" cy="1368" r="6"/><circle cx="400" cy="1376" r="6"/><circle cx="509" cy="1350" r="10"/><circle cx="540" cy="1376" r="6"/><circle cx="235" cy="1320" r="7"/>
    </g>
    <!-- behind the contact prompt -->
    <g transform="translate(0 1360) scale(.3827 .3333)">
      <path d="M512 60L530 130L640 80C670 80 665 110 650 115L500 160M550 60L572 250M0 85C70 110 80 200 65 240L0 210M795 85C800 120 810 135 830 145C800 150 785 180 780 205C770 170 760 150 735 145C770 130 790 110 795 85M180 560C100 500 60 430 65 370C70 340 110 340 150 340M150 340C130 260 150 220 200 200C200 150 270 150 280 200C320 210 320 260 310 330M390 570L660 500C685 510 675 535 655 540L400 598C380 590 380 575 390 570M735 580C700 450 680 420 690 380C710 330 780 310 820 330C870 360 860 430 850 480L830 520L835 570C810 610 770 610 745 590M635 660C630 600 700 590 735 583M635 660C610 750 650 960 735 970C790 960 800 900 1130 830C1130 760 1070 720 970 760M755 685L735 583M755 685L840 650M850 550L890 680L1015 655C1000 590 970 530 890 540L850 550M1065 560L1135 565L1130 640L1062 635ZM1140 520H1172L1165 570L1135 565M1255 500C1290 500 1300 450 1308 425C1315 460 1340 480 1378 480C1340 500 1330 540 1325 565C1310 520 1290 510 1255 500M120 770C100 700 150 630 210 630C250 580 350 600 360 640C420 640 430 720 400 770M190 700C210 620 400 600 415 750V830H330M480 690L530 680L525 740L560 745L515 820L510 775H490ZM0 780C50 830 70 870 65 910L0 930M155 1030L320 980L360 1130C360 1170 320 1180 200 1190ZM155 1030C140 960 170 950 215 940L210 905L160 915L165 960M470 930C540 930 600 1020 640 1130L660 1180L600 1190C510 1120 460 1020 470 930ZM560 965L700 1030C720 1040 715 1060 690 1070L640 1090M765 1195L915 1085C920 1150 880 1200 870 1200L765 1195M1065 970L1210 1000C1230 1010 1225 1020 1200 1140C1190 1150 1180 1150 1100 1135L1070 1155L1065 1130C1035 1125 1035 1110 1050 990ZM1110 970C1110 900 1190 910 1185 990M1085 1030L1185 1052M1080 1062L1155 1080M1310 1005L1400 1040M1445 910L1435 990M1290 1170L1370 1160M1380 1330L1430 1240M1535 1360V1260M1430 1100C1430 1210 1540 1210 1545 1130M50 1260L130 1230L145 1290L75 1315ZM350 1200L400 1190L395 1250L425 1250L400 1310L385 1260H365ZM170 1360L250 1350L370 1450M640 1400L695 1330L750 1450M490 1480L560 1400L610 1480M730 1490L880 1390L1030 1490M910 1390C980 1180 1300 1150 1365 1450M1000 1420C1060 1330 1200 1330 1245 1450"/>
      <ellipse cx="432" cy="145" rx="59" ry="67"/><ellipse cx="1015" cy="405" rx="105" ry="122"/><ellipse cx="1480" cy="1130" rx="112" ry="130"/><ellipse cx="130" cy="90" rx="25" ry="29"/><ellipse cx="565" cy="640" rx="25" ry="29"/><ellipse cx="1238" cy="612" rx="32" ry="36"/><ellipse cx="75" cy="1048" rx="32" ry="36"/><ellipse cx="818" cy="1018" rx="25" ry="29"/><ellipse cx="1355" cy="910" rx="32" ry="36"/><ellipse cx="85" cy="628" rx="25" ry="29"/><ellipse cx="1355" cy="365" rx="25" ry="29"/>
    </g>
    <g transform="translate(740 1380) scale(.3333)">
      <path d="M0 40C30 60 20 100 45 102L80 70C110 70 130 40 120 20L90 0M80 80L115 110C125 112 128 105 125 95L98 65M160 100C150 60 190 40 240 30L340 12C400 5 440 40 460 90L475 170C480 220 440 240 400 245L290 255C230 260 200 230 190 190ZM258 135C260 90 330 80 335 115C335 150 280 180 250 150M335 160C350 140 380 140 402 130"/>
      <path d="M660 0L632 48L880 128C900 80 880 20 865 0M880 45C920 0 980 0 1020 20M690 70C700 130 760 160 795 190C830 240 790 260 745 265L870 305C890 305 890 280 915 240C950 230 990 220 1010 180M715 80C730 120 770 130 768 105M785 105C830 110 870 160 862 205M890 115L1020 155M940 135L930 160M975 145L965 185M0 255C90 250 130 340 70 400C50 420 30 425 0 425M270 353L305 338"/>
      <path d="M425 370C470 340 620 400 690 485C740 485 760 520 725 555C700 590 660 590 640 585C600 640 520 640 460 615C380 570 390 440 425 370ZM445 390C460 370 560 390 640 450C680 490 660 490 600 480C540 465 450 430 445 390ZM442 505C460 555 510 565 542 540M655 550L680 512H708C710 530 680 560 665 558Z"/>
      <path d="M740 425C735 405 750 395 765 405L795 435L880 350C895 340 905 352 900 362L800 468C792 472 788 470 740 425ZM838 460L940 352C955 348 962 360 955 368L860 475C845 485 830 475 838 460ZM975 502C900 520 900 620 985 622C1000 620 1015 612 1020 600M975 502C965 550 990 575 1020 570"/>
      <path d="M135 572C150 540 180 535 200 553C240 520 320 540 315 610L310 642C340 670 330 740 270 735L105 680C50 650 70 570 135 572ZM258 640C240 690 175 680 180 630C190 590 235 580 250 610M258 595L252 614L232 608M390 768L482 725L450 825L425 785ZM0 725L20 675L18 765L45 745V805M0 808H75M148 915C160 830 230 780 290 785C350 790 380 850 370 895C360 910 350 910 160 930C150 930 146 925 148 915Z"/>
      <circle cx="230" cy="862" r="26"/><circle cx="295" cy="860" r="26"/>
      <path d="M795 665C830 650 900 640 960 655L1020 680M795 665C780 700 830 790 850 810C890 860 940 880 1020 870M865 660L820 760M900 655L838 798M888 705L1008 765M920 700L905 732M948 712L930 750M975 725L960 765M1000 740L985 780"/>
      <path d="M565 790C620 750 740 740 780 800C810 860 790 940 750 970C700 1020 620 1020 580 980C530 930 510 840 565 790ZM600 860C640 810 710 800 730 850C730 890 690 930 660 945C610 950 580 900 600 860ZM670 820L675 760M720 835L765 800M730 890L795 900M695 930L735 970M655 945L645 1005M610 920L545 945M595 880L530 885M630 840L600 805M645 765C640 700 700 700 695 765M545 870C490 890 480 830 555 835M540 945L485 985C450 1020 490 1050 520 1035L575 985M640 1005C620 1060 680 1060 685 1000M800 885C840 890 835 940 770 930"/>
      <path d="M0 940C20 920 70 910 80 955C130 960 130 1010 75 1005C50 1015 30 1010 0 1000M850 985C820 1010 840 1050 880 1035C910 1040 930 1040 935 1030C980 1040 985 990 945 985C930 940 870 950 872 985ZM308 1075L335 1100M940 1105C945 1140 960 1155 995 1158C965 1165 950 1180 948 1212C940 1180 920 1165 892 1162C920 1150 935 1140 940 1105Z"/>
      <path d="M105 1440L70 1190C70 1175 80 1170 95 1168L215 1153C235 1155 240 1165 240 1180L275 1440M250 1215C255 1205 265 1205 415 1190C435 1190 440 1200 440 1210L468 1425L400 1435M110 1225L145 1222V1255H115ZM175 1218L208 1215V1248H180ZM120 1275L152 1270V1302H125ZM182 1265L212 1262V1298H185ZM125 1320L158 1318V1352H130ZM188 1312L220 1310V1342H192ZM302 1260L335 1256V1290H305ZM362 1252L395 1248V1282H366ZM308 1308L340 1305V1338H312ZM370 1300L400 1296V1328H373ZM165 1440L160 1395L200 1390L205 1440M352 1440L345 1372L385 1368L392 1430"/>
      <circle cx="643" cy="1217" r="135"/>
      <path d="M582 1232L630 1197L682 1232L665 1288H600ZM585 1110L600 1092H675L685 1125L635 1143ZM725 1155L755 1150M755 1245L720 1215L730 1155M520 1240L540 1200L535 1150M535 1280L585 1320L590 1335M680 1340L740 1290M690 1080L785 1055C740 1090 740 1140 800 1110L890 1090C800 1130 770 1190 800 1205C820 1220 860 1205 875 1200C840 1240 820 1260 770 1272M850 1300C840 1280 940 1290 1020 1315M850 1300L840 1365C850 1390 940 1410 1020 1420M860 1310C880 1330 960 1345 1020 1350M675 1400L785 1380L750 1440M850 1385L855 1440"/>
      <circle cx="540" cy="88" r="17"/><circle cx="620" cy="160" r="29"/><circle cx="515" cy="290" r="28"/><circle cx="342" cy="327" r="37"/><circle cx="661" cy="342" r="28"/><circle cx="176" cy="372" r="28"/><circle cx="270" cy="461" r="28"/><circle cx="124" cy="491" r="17"/><circle cx="964" cy="457" r="17"/><circle cx="838" cy="585" r="17"/><circle cx="388" cy="660" r="28"/><circle cx="678" cy="642" r="28"/><circle cx="568" cy="717" r="17"/><circle cx="108" cy="750" r="17"/><circle cx="407" cy="942" r="17"/><circle cx="285" cy="1045" r="38"/><circle cx="155" cy="1079" r="17"/><circle cx="451" cy="1103" r="17"/><circle cx="15" cy="1216" r="17"/><circle cx="562" cy="1407" r="17"/><circle class="dot" cx="440" cy="468" r="12"/><circle class="dot" cx="562" cy="524" r="12"/>
    </g>
    <!-- around the composer -->
    <g transform="translate(0 1850) scale(.3444 .3333)">
      <path d="M0 85L25 30M170 10C170 40 190 40 205 25M198 95L262 92M235 40L262 35M262 10L270 102L340 90L330 5L262 15M340 78L375 72M210 155L405 130M435 186H1150M435 186L540 40L570 20M590 30C585 80 605 80 625 30M675 30L682 36L690 28M788 182C850 130 930 130 1000 160C1050 145 1110 150 1150 186M878 30V140M1083 40V152M800 10C810 80 850 60 885 30L1000 0L1085 35C1110 80 1160 60 1150 30M943 38H1018V116H943ZM980 38V116M943 76H1018M1190 30C1200 100 1300 100 1312 30M1385 30C1390 80 1340 150 1322 212M1520 30C1530 100 1490 160 1467 212M1457 42C1455 70 1445 95 1435 112M1413 170L1400 212M198 212C205 202 230 202 245 212"/>
      <circle cx="198" cy="70" r="30"/><circle cx="205" cy="125" r="30"/><circle cx="398" cy="45" r="30"/><circle cx="405" cy="100" r="30"/><circle cx="91" cy="102" r="18"/><circle cx="2" cy="182" r="18"/><circle cx="104" cy="222" r="28"/><circle cx="54" cy="354" r="36"/><circle cx="1245" cy="167" r="28"/><circle cx="1562" cy="116" r="28"/><circle cx="1537" cy="207" r="18"/><circle cx="1093" cy="680" r="18"/>
      <path d="M0 470C20 465 35 462 48 465M0 545L12 560M18 548C20 570 35 575 48 572M0 585L12 582M78 678C80 630 90 600 105 575M115 678C118 640 125 610 135 592M0 678C15 665 18 655 25 650M228 678L245 630M265 630C275 655 290 650 295 630M382 630L425 678M500 630L520 678M510 630L545 678M550 678L605 640V630M775 678C790 630 850 610 880 635L945 678M970 630C980 642 1000 640 1010 630M1182 630L1195 678M1240 630L1252 678M1400 678L1480 630M1440 678L1520 630M1480 678L1550 630"/>
    </g>
    <g transform="translate(540 1850) scale(.3444 .3333)">
      <path d="M25 30C30 65 70 60 98 60C70 100 45 140 55 150C75 160 105 110 130 70C110 120 110 160 145 165C170 160 155 110 152 75C175 115 210 120 222 95C225 70 190 55 168 52C200 48 240 40 248 30M152 75C180 120 190 170 190 212M180 110C220 130 235 170 242 212M315 30C370 80 410 115 460 115C520 110 555 80 553 30M402 30C420 65 480 65 495 30M675 30L685 64L935 32M742 30L748 50M782 30L788 45M333 115C340 150 360 155 393 156C360 170 350 185 345 212C335 190 320 178 290 177C320 165 332 145 333 115ZM430 212L455 185L535 140L550 212M455 185L470 212M545 150C590 140 620 150 627 175L618 212M627 178C655 180 675 195 675 212M798 168L838 115C845 112 850 115 898 150C910 170 905 190 870 212L800 175M975 85C980 70 1000 70 1015 80C1010 40 1045 45 1037 78C1070 70 1080 90 1050 105C1060 130 1050 155 1030 145L1020 125C1010 150 980 150 985 125L1000 108C980 105 970 95 975 85ZM1180 95C1185 88 1205 88 1207 97L1210 120C1240 110 1255 125 1248 142L1215 155C1220 190 1210 195 1195 192L1188 160C1150 170 1140 145 1155 135L1182 128ZM1255 30L1318 60V30M1410 30L1418 95C1450 130 1500 130 1550 125L1568 90"/>
      <path d="M940 215C980 200 1020 215 1025 245C1040 180 1120 170 1128 250C1160 235 1185 240 1195 262M1010 265C1080 270 1130 320 1120 390M1035 310C1060 300 1085 305 1095 320M1080 375C1085 360 1095 355 1100 360M1060 520L1115 465L1100 455M1465 258L1508 240L1515 290L1550 290C1540 330 1520 340 1510 350M1510 530L1568 460M1545 525C1550 545 1568 545 1568 545M1545 560C1550 580 1568 580 1568 580M955 620C960 640 965 650 970 658M930 668L1045 645L1055 678M1045 650C1060 625 1090 630 1090 645V612L1190 592M1080 660C1100 640 1150 650 1150 678M1215 612L1225 678M1272 625L1278 678M1400 678C1390 640 1410 605 1450 600M1440 678C1450 610 1520 580 1568 605M1490 630L1512 625M1525 640L1545 640M1500 650C1505 660 1520 665 1530 655M550 630V660L590 630M655 630L668 678M710 672L825 655M835 678C840 655 860 640 870 632M110 630C115 670 160 670 165 630M275 630V678L325 630M0 640L10 678M220 678L240 630M355 678L375 630M415 678L430 630"/>
      <circle cx="0" cy="117" r="24"/><circle cx="610" cy="75" r="18"/><circle cx="709" cy="128" r="29"/><circle cx="1348" cy="149" r="29"/><circle cx="1462" cy="182" r="18"/><circle cx="1568" cy="180" r="18"/><circle class="dot" cx="853" cy="171" r="8"/>
    </g>
  </svg>

  <section class="messages" aria-label="Messages">
    <div class="bubble bubble-out bubble-tail"><p class="msg">Cloed</p><time class="time">02:00</time><svg class="ticks" width="48" height="30" viewBox="0 0 48 30" role="img" aria-label="Read"><path d="M2.500 17.500L11.500 27L31 2.500M23 24.500L26 27L46 2.500" fill="none" stroke="#027eee" stroke-width="4.500" stroke-linecap="round"/></svg></div>
    <div class="bubble bubble-out"><p class="msg">Closed</p><time class="time">02:00</time><svg class="ticks" width="48" height="30" viewBox="0 0 48 30" role="img" aria-label="Read"><path d="M2.500 17.500L11.500 27L31 2.500M23 24.500L26 27L46 2.500" fill="none" stroke="#027eee" stroke-width="4.500" stroke-linecap="round"/></svg></div>
    <div class="unread"><span class="unread-pill">3 unread messages</span></div>
    <div class="bubble bubble-in bubble-tail bubble-reply">
      <blockquote class="quote"><strong class="quote-author">You</strong><span class="quote-text">Cloed</span></blockquote>
      <div class="reply-row"><p class="msg">Yes</p><time class="time">02:00</time></div>
    </div>
    <div class="bubble bubble-in"><p class="msg">Pizza available</p><time class="time">02:01</time></div>
    <div class="bubble bubble-in bubble-rich">
      <div class="lines">
        <p class="line">FOR PIZZA <svg width="66" height="66" viewBox="0 0 66 66" role="img" aria-label="pizza"><defs><linearGradient id="crust" x1="0" y1="0" x2="1" y2="1"><stop offset="0" stop-color="#f0b95c"/><stop offset="1" stop-color="#c67f28"/></linearGradient></defs><path d="M11 38C18 22 34 14 52 11L66 65C46 62 24 52 11 38Z" fill="#f8bd78"/><path d="M13 39C26 51 46 60 66 65C46 64 24 55 12 42Z" fill="#c26a2a"/><path d="M12 40C18 26 34 16 52 13" fill="none" stroke="#d2622d" stroke-width="3"/><path d="M1 33C-2 20 36 -2 48 .5C51 3 53 8 52 12C34 15 20 24 13 38C10 40 3 37 1 33Z" fill="url(#crust)"/><path d="M3 28C12 14 32 4 47 3" fill="none" stroke="#f8d486" stroke-width="2"/><g fill="#c9431d"><circle cx="45" cy="23" r="6.500"/><circle cx="32" cy="40" r="7"/><circle cx="55" cy="50" r="6.500"/></g><g fill="#bbb" stroke="#30343b" stroke-width="3"><circle cx="35" cy="29" r="2.500"/><circle cx="52" cy="34" r="2.500"/><circle cx="43" cy="50" r="2.500"/></g><path d="M20 36L28 29M19 32L27 33M41 39L53 41M44 42L49 37" stroke="#78a53a" stroke-width="2"/></svg></p>
        <p class="line"><a class="phone-link" href="tel:03244400999">03244400999</a></p>
        <p class="line line-hand"><svg width="49" height="66" viewBox="0 0 49 66" role="img" aria-label="backhand index pointing up"><path d="M20 4C20 0 27 0 27.500 4L28 25C31 22 35 24 36 26C39 24 42 26 43 28C47 26 49 30 49 34C49 46 46 50 45 54V63C45 67 22 67 22 64V55C16 49 12 43 2 39C-2 36 2 32 7 34L16 37C19 37 19.500 34 19.500 30Z" fill="#dfb28c" stroke="#c18d68" stroke-width="1"/><path d="M28 25C31 28 34 27 36 26M36 26C38 29 41 29 43 28" fill="none" stroke="#b98460" stroke-width="1"/></svg></p>
        <p class="line"> WHATSAPP</p>
      </div>
      <time class="time">02:01</time>
    </div>
  </section>

  <section class="prompt">
    <p class="prompt-text">Found 1 contact card for this number. Add to your contacts?</p>
    <button class="prompt-btn"><span class="prompt-icon"><svg width="66" height="48" viewBox="0 0 66 48"><g fill="none" stroke="#1b8755" stroke-width="6" stroke-linejoin="round"><circle cx="24" cy="12" r="9"/><path d="M3 45V40C3 33 13 30 24 30S45 33 45 40V45Z"/></g><path d="M38.500 .5C46 -1 54 4 54 12S46 25 38.500 23.500C43 16 43 8 38.500 .5ZM48 28C58 30 66 34 66 40V44Q66 48 62 48H52C55 46 56 37 48 28Z" fill="#1b8755"/></svg></span>View contact cards</button>
    <button class="prompt-btn"><span class="prompt-icon"><svg width="40" height="40" viewBox="0 0 40 40"><path d="M2.500 2.500L37.500 37.500M37.500 2.500L2.500 37.500" stroke="#1b8755" stroke-width="5" stroke-linecap="round"/></svg></span>No thanks</button>
  </section>

  <form class="composer">
    <div class="field">
      <button type="button" class="icon-btn" aria-label="Stickers"><svg width="60" height="60" viewBox="0 0 60 60"><g fill="none" stroke="#5b6368" stroke-width="6"><path d="M20 3H40C50 3 57 10 57 20V34C57 39 55 42 51 46L46 51C42 55 38 57 32 57H20C10 57 3 50 3 40V20C3 10 10 3 20 3Z"/><path d="M33 57V47C33 38 36 33 45 33H57"/></g><g fill="#5b6368"><circle cx="19.500" cy="20.500" r="4.500"/><circle cx="40.500" cy="20.500" r="4.500"/><path d="M16 34H40L33 44C24 45 18 41 16 34Z"/></g></svg></button>
      <input class="field-input" type="text" placeholder="Message" aria-label="Message">
      <button type="button" class="icon-btn attach" aria-label="Attach"><svg width="38" height="60" viewBox="0 0 38 60"><path d="M35 15V41A16 16 0 0 1 3 41V14A10.500 10.500 0 0 1 24 14V41A5 5 0 0 1 14 41V15" fill="none" stroke="#5b6368" stroke-width="6" stroke-linecap="round"/></svg></button>
      <button type="button" class="icon-btn" aria-label="Camera"><svg width="60" height="54" viewBox="0 0 60 54"><g fill="none" stroke="#5b6368" stroke-width="6"><path stroke-linejoin="round" d="M3 9H17L23 3H37L43 9H57V51H3Z"/><circle cx="30" cy="30" r="10.500"/></g></svg></button>
    </div>
    <button type="button" class="mic" aria-label="Record voice message"><svg width="42" height="57" viewBox="0 0 42 57"><rect x="12" y="0" width="18" height="36" rx="9" fill="#fff"/><path d="M3 30C4 40 12 46 21 46S38 40 39 30M21 46V54" fill="none" stroke="#fff" stroke-width="6" stroke-linecap="round"/></svg></button>
  </form>
</main>

<nav class="navbar" aria-label="System navigation">
  <button class="icon-btn" aria-label="Recent apps"><svg width="42" height="46" viewBox="0 0 42 46"><path d="M3 3V43M21 3V43M39 3V43" stroke="#8f9092" stroke-width="6" stroke-linecap="round"/></svg></button>
  <button class="icon-btn" aria-label="Home"><svg width="48" height="48" viewBox="0 0 48 48"><rect x="3" y="3" width="42" height="42" rx="14" fill="none" stroke="#8f9092" stroke-width="6"/></svg></button>
  <button class="icon-btn" aria-label="Back"><svg width="26" height="46" viewBox="0 0 26 46"><path d="M23 3L4 23L23 43" fill="none" stroke="#8f9092" stroke-width="6" stroke-linecap="round"/></svg></button>
</nav>
</body>
</html>
```
FILE: styles.css
```css
* {
  box-sizing: border-box;
}

body {
  margin: 0;
  min-height: 100vh;
  display: flex;
  flex-direction: column;
  background: #fff;
  color: #0b1014;
  font-family: Roboto, "Liberation Sans", sans-serif;
}

p,
h1,
blockquote {
  margin: 0;
}

svg {
  display: block;
  flex: none;
}

button {
  border: 0;
  background: none;
  font: inherit;
  cursor: pointer;
}

.icon-btn {
  padding: 0;
  flex: none;
}

/* status bar */
.statusbar {
  display: flex;
  align-items: center;
  height: 72px;
  padding: 0 76px;
  color: #666;
}

.statusbar-time {
  font-size: 45px;
  line-height: 72px;
  margin-right: 19px;
}

.statusbar-icons {
  display: flex;
  align-items: center;
  margin-left: auto;
}

.wifi,
.signal {
  margin-left: 13px;
}

.battery {
  margin-left: 14px;
}

/* app bar */
.appbar {
  display: flex;
  align-items: center;
  height: 168px;
  padding: 0 60px 0 25px;
  border-bottom: 1px solid #e4e4e4;
}

.avatar {
  width: 105px;
  height: 105px;
  margin-left: 12px;
}

.logo-name {
  font: italic bold 24px "Liberation Sans", sans-serif;
  fill: #fff;
}

.logo-sub {
  font: 9px "Liberation Sans", sans-serif;
  fill: #f3c9c5;
}

.appbar-title {
  margin-left: 26px;
  font-size: 52px;
  font-weight: 400;
  line-height: 64px;
  white-space: nowrap;
}

.appbar-actions {
  display: flex;
  align-items: center;
  gap: 90px;
  margin-left: auto;
}

/* chat */
.chat {
  flex: 1;
  display: flex;
  flex-direction: column;
  position: relative;
  background: #f5f2eb;
}

.wallpaper {
  position: absolute;
  inset: 0;
  width: 100%;
  height: 100%;
  fill: none;
  stroke: #eae0d5;
  stroke-linecap: round;
  stroke-linejoin: round;
}

.wallpaper * {
  vector-effect: non-scaling-stroke;
  stroke-width: 3px;
}

.wallpaper .dot {
  fill: #eae0d5;
  stroke: none;
}

.wallpaper .doodle-text {
  font: bold 60px Roboto, sans-serif;
  fill: #eae0d5;
  stroke: none;
}

.messages,
.prompt,
.composer {
  position: relative;
}

.messages {
  flex: 1;
  display: flex;
  flex-direction: column;
  align-items: flex-start;
  gap: 8px;
  padding: 23px 51px 63px;
}

.bubble {
  position: relative;
  display: flex;
  align-items: flex-end;
  border-radius: 36px;
  background: #fff;
  box-shadow: 0 2px 2px rgba(0, 0, 0, 0.1);
}

.bubble-in {
  padding: 0 24px 0 30px;
}

.bubble-out {
  align-self: flex-end;
  padding: 0 27px 0 30px;
  background: #d9fdd3;
}

.bubble-tail::after {
  content: "";
  position: absolute;
  top: 0;
  width: 22px;
  height: 34px;
  background: inherit;
}

.bubble-out.bubble-tail {
  border-top-right-radius: 0;
}

.bubble-out.bubble-tail::after {
  left: 100%;
  clip-path: path("M0 0H16Q23 1 20 8L0 33Z");
}

.bubble-in.bubble-tail {
  border-top-left-radius: 0;
}

.bubble-in.bubble-tail::after {
  right: 100%;
  clip-path: path("M22 0H6Q-1 1 2 8L22 33Z");
}

.msg {
  padding: 19px 0 23px;
  font-size: 48px;
  line-height: 56px;
}

.time {
  margin-left: 42px;
  padding-bottom: 10px;
  font-size: 36px;
  line-height: 42px;
  color: #899094;
}

.bubble-out .time {
  margin-left: 24px;
  color: #768e76;
}

.ticks {
  margin: 0 0 19px 10px;
}

.unread {
  align-self: stretch;
  display: flex;
  justify-content: center;
  margin: 5px -51px 16px;
  padding: 18px;
  background: rgba(255, 255, 255, 0.3);
}

.unread-pill {
  padding: 4px 60px 0;
  border-radius: 50px;
  background: #fff;
  font-size: 39px;
  font-weight: 700;
  line-height: 95px;
}

.bubble-reply {
  flex-direction: column;
  align-items: stretch;
  padding: 12px 12px 0;
}

.quote {
  display: flex;
  flex-direction: column;
  width: 360px;
  padding: 17px 25px 13px 36px;
  border-radius: 24px;
  background: linear-gradient(90deg, #1fab61 12px, #f6f5f4 12px);
  font-size: 42px;
  line-height: 57px;
}

.quote-author {
  font-weight: 500;
  color: #1b6745;
}

.quote-text {
  color: #5b6368;
}

.reply-row {
  display: flex;
  align-items: flex-end;
  justify-content: space-between;
  padding: 0 12px 0 18px;
}

.reply-row .msg {
  padding-top: 13px;
}

.bubble-rich {
  min-width: 518px;
  justify-content: space-between;
}

.lines {
  padding: 24px 0 17px;
  font-size: 48px;
  font-weight: 700;
  line-height: 69px;
}

.line {
  display: flex;
  align-items: center;
  height: 69px;
  white-space: pre;
}

.line-hand {
  padding-left: 114px;
}

.phone-link {
  color: #0063cb;
  font-size: 49px;
  text-decoration-thickness: 3px;
  text-underline-offset: 4px;
}

/* contact prompt */
.prompt {
  padding: 42px 60px 12px;
  border-top: 1px solid #e3e1de;
  border-bottom: 1px solid #e3e1de;
  background: rgba(255, 255, 255, 0.86);
}

.prompt-text {
  margin-bottom: 38px;
  font-size: 42px;
  line-height: 49px;
  color: #5b6368;
}

.prompt-btn {
  display: flex;
  align-items: center;
  gap: 48px;
  width: 100%;
  height: 144px;
  padding: 0;
  font-size: 45px;
  font-weight: 500;
  color: #1b8755;
}

.prompt-icon {
  display: flex;
  justify-content: center;
  width: 72px;
}

/* composer */
.composer {
  display: flex;
  align-items: center;
  gap: 15px;
  padding: 60px 13px 14px 15px;
}

.field {
  flex: 1;
  min-width: 0;
  display: flex;
  align-items: center;
  height: 139px;
  padding: 0 42px 0 33px;
  border-radius: 70px;
  background: #fff;
  box-shadow: 0 2px 3px rgba(0, 0, 0, 0.22);
}

.field-input {
  flex: 1;
  min-width: 0;
  height: 73px;
  margin: 0 24px 0 36px;
  padding: 0;
  border: 0;
  outline: 0;
  background: linear-gradient(#1fab61, #1fab61) left center / 6px 100% no-repeat;
  color: #0b1014;
  font-family: inherit;
  font-size: 54px;
}

.field-input::placeholder {
  color: #5b6368;
  opacity: 1;
}

.attach {
  margin-right: 90px;
}

.mic {
  flex: none;
  display: flex;
  align-items: center;
  justify-content: center;
  width: 141px;
  height: 141px;
  padding: 0;
  border-radius: 50%;
  background: #1fab61;
  box-shadow: 0 3px 5px rgba(0, 0, 0, 0.25);
}

/* system navigation */
.navbar {
  display: flex;
  align-items: center;
  justify-content: space-between;
  height: 144px;
  padding: 0 223px 6px 219px;
  background: #f6f8fa;
}
```
